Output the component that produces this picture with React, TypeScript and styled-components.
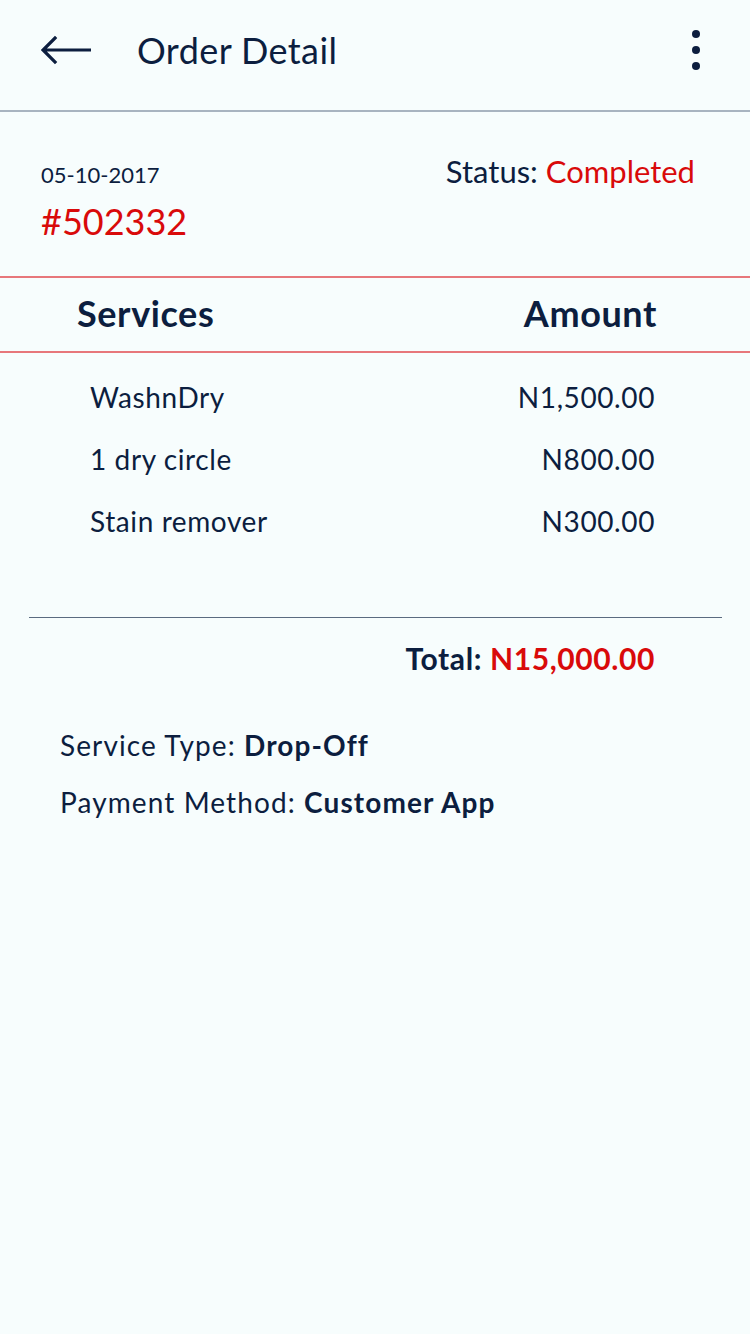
import React from "react";
import styled, { createGlobalStyle } from "styled-components";

const Global = createGlobalStyle`
  html, body { margin: 0; padding: 0; background: #f7fdfd; }
  body { font-family: Lato, "Open Sans", sans-serif; color: #0c1e3f; }
  * { box-sizing: border-box; }
`;

const Page = styled.div`
  width: 750px;
  min-height: 1334px;
  background: #f7fdfd;
  display: flex;
  flex-direction: column;
`;

const Header = styled.header`
  height: 112px;
  border-bottom: 2px solid #a8b4c0;
  display: flex;
  align-items: center;
  padding: 0 0 10px 41px;
`;

const BackButton = styled.button`
  border: 0;
  background: none;
  padding: 0;
  width: 50px;
  height: 30px;
  display: flex;
  align-items: center;
  color: #0c1e3f;
`;

const Title = styled.h1`
  margin: 0 0 0 46px;
  font-size: 36px;
  font-weight: 400;
  letter-spacing: 0.4px;
  flex: 1;
`;

const MenuButton = styled.button`
  border: 0;
  background: none;
  padding: 0;
  width: 12px;
  height: 40px;
  margin-right: 48px;
  display: flex;
  flex-direction: column;
  align-items: center;
  justify-content: space-between;
`;

const Dot = styled.span`
  width: 8px;
  height: 8px;
  border-radius: 50%;
  background: #0c1e3f;
`;

const Info = styled.section`
  padding: 40px 55px 33px 41px;
  border-bottom: 2px solid #e7777b;
`;

const InfoRow = styled.div`
  display: flex;
  justify-content: space-between;
  align-items: baseline;
`;

const DateText = styled.span`
  font-size: 22px;
`;

const Status = styled.span`
  font-size: 31px;
`;

const Red = styled.span<{ $bold?: boolean }>`
  color: #d90a0a;
  font-weight: ${(p) => (p.$bold ? 700 : 400)};
`;

const OrderNo = styled.div`
  margin-top: 9px;
  font-size: 36px;
  line-height: 44px;
  color: #d90a0a;
`;

const TableHead = styled.div`
  height: 75px;
  border-bottom: 2px solid #e7777b;
  display: flex;
  align-items: center;
  justify-content: space-between;
  padding: 0 93px 3px 77px;
  font-size: 36px;
  font-weight: 700;
  letter-spacing: 0.6px;
`;

const Rows = styled.div`
  padding: 13px 95px 0 90px;
  display: flex;
  flex-direction: column;
`;

const Row = styled.div`
  height: 62px;
  display: flex;
  align-items: center;
  justify-content: space-between;
  font-size: 28px;
  letter-spacing: 0.6px;
`;

const Divider = styled.hr`
  margin: 65px 28px 0 29px;
  border: 0;
  border-top: 1px solid #5b6b80;
`;

const Total = styled.div`
  margin-top: 20px;
  padding-right: 95px;
  text-align: right;
  font-size: 30px;
  font-weight: 700;
  letter-spacing: 0.6px;
  line-height: 40px;
`;

const Details = styled.div`
  margin-top: 47px;
  padding-left: 60px;
  display: flex;
  flex-direction: column;
  gap: 17px;
`;

const DetailLine = styled.div`
  font-size: 28px;
  letter-spacing: 1.1px;
  line-height: 40px;
`;

const Strong = styled.b`
  font-weight: 700;
`;

const items = [
  { name: "WashnDry", amount: "N1,500.00" },
  { name: "1 dry circle", amount: "N800.00" },
  { name: "Stain remover", amount: "N300.00" },
];

export default function App() {
  return (
    <Page>
      <Global />
      <Header>
        <BackButton aria-label="Back">
          <svg width="50" height="30" viewBox="0 0 50 30" fill="none">
            <path d="M49 15H3M14 3L2 15l12 12" stroke="#0c1e3f" strokeWidth="3.2" strokeLinecap="square" />
          </svg>
        </BackButton>
        <Title>Order Detail</Title>
        <MenuButton aria-label="More">
          <Dot />
          <Dot />
          <Dot />
        </MenuButton>
      </Header>
      <Info>
        <InfoRow>
          <DateText>05-10-2017</DateText>
          <Status>
            Status: <Red>Completed</Red>
          </Status>
        </InfoRow>
        <OrderNo>#502332</OrderNo>
      </Info>
      <TableHead>
        <span>Services</span>
        <span>Amount</span>
      </TableHead>
      <Rows>
        {items.map((it) => (
          <Row key={it.name}>
            <span>{it.name}</span>
            <span>{it.amount}</span>
          </Row>
        ))}
      </Rows>
      <Divider />
      <Total>
        Total: <Red $bold>N15,000.00</Red>
      </Total>
      <Details>
        <DetailLine>
          Service Type: <Strong>Drop-Off</Strong>
        </DetailLine>
        <DetailLine>
          Payment Method: <Strong>Customer App</Strong>
        </DetailLine>
      </Details>
    </Page>
  );
}
